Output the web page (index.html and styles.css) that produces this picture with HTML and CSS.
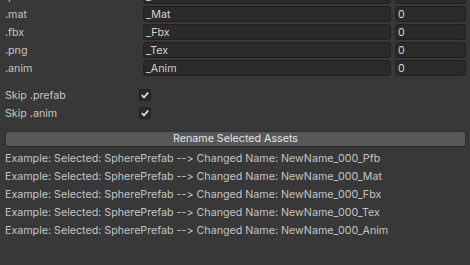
FILE: index.html
```html
<!DOCTYPE html>
<html>
<head>
<meta charset="utf-8">
<link rel="stylesheet" href="styles.css">
</head>
<body>
<div class="inspector">
  <div class="suffix-grid">
    <div class="label">.prefab</div><div class="field">_Pfb</div><div class="field num">0</div>
    <div class="label">.mat</div><div class="field">_Mat</div><div class="field num">0</div>
    <div class="label">.fbx</div><div class="field">_Fbx</div><div class="field num">0</div>
    <div class="label">.png</div><div class="field">_Tex</div><div class="field num">0</div>
    <div class="label">.anim</div><div class="field">_Anim</div><div class="field num">0</div>
  </div>
  <div class="toggles">
    <div class="toggle-row">
      <div class="label">Skip .prefab</div>
      <div class="checkbox"><svg width="10" height="10" viewBox="0 0 10 10"><path d="M1.8 5.2 L4 7.3 L8.2 2.6" fill="none" stroke="#e6e6e6" stroke-width="1.6"/></svg></div>
    </div>
    <div class="toggle-row">
      <div class="label">Skip .anim</div>
      <div class="checkbox"><svg width="10" height="10" viewBox="0 0 10 10"><path d="M1.8 5.2 L4 7.3 L8.2 2.6" fill="none" stroke="#e6e6e6" stroke-width="1.6"/></svg></div>
    </div>
  </div>
  <button class="btn">Rename Selected Assets</button>
  <div class="examples">
    <div class="example">Example: Selected: SpherePrefab --&gt; Changed Name: NewName_000_Pfb</div>
    <div class="example">Example: Selected: SpherePrefab --&gt; Changed Name: NewName_000_Mat</div>
    <div class="example">Example: Selected: SpherePrefab --&gt; Changed Name: NewName_000_Fbx</div>
    <div class="example">Example: Selected: SpherePrefab --&gt; Changed Name: NewName_000_Tex</div>
    <div class="example">Example: Selected: SpherePrefab --&gt; Changed Name: NewName_000_Anim</div>
  </div>
</div>
</body>
</html>
```
FILE: styles.css
```css
html, body {
  margin: 0;
  padding: 0;
  background: #383838;
  width: 470px;
  height: 265px;
  overflow: hidden;
}
html {
  box-shadow: inset -1px 0 #3e3e3e;
}
body {
  font-family: Inter, "Liberation Sans", sans-serif;
  font-size: 10.7px;
  font-feature-settings: "calt" 0, "liga" 0;
  color: #c4c4c4;
}
.inspector {
  padding: 0 4px 0 5px;
  margin-top: -12px;
}
.suffix-grid {
  display: grid;
  grid-template-columns: 134px 1fr 71px;
  grid-auto-rows: 16px;
  column-gap: 4px;
  row-gap: 2px;
}
.label {
  line-height: 16px;
  padding-top: 1px;
  white-space: nowrap;
}
.field {
  box-sizing: border-box;
  background: #2a2a2a;
  border: 1px solid #212121;
  border-radius: 3px;
  padding: 1px 2px 0;
  line-height: 14px;
  color: #d2d2d2;
  white-space: nowrap;
  overflow: hidden;
}
.toggles {
  margin-top: 9px;
}
.toggle-row {
  display: grid;
  grid-template-columns: 134px 12px;
  align-items: center;
  height: 18px;
}
.toggle-row .label {
  line-height: 18px;
  padding-top: 2px;
}
.checkbox {
  box-sizing: border-box;
  width: 12px;
  height: 12px;
  background: #2a2a2a;
  border: 1px solid #212121;
  border-radius: 2px;
  display: flex;
  align-items: center;
  justify-content: center;
}
.btn {
  display: block;
  box-sizing: border-box;
  width: 100%;
  height: 16px;
  margin-top: 10px;
  padding: 0;
  background: #585858;
  border: 1px solid #303030;
  border-bottom-color: #242424;
  border-radius: 3px;
  font-family: Inter, "Liberation Sans", sans-serif;
  font-size: 10.7px;
  font-feature-settings: "calt" 0, "liga" 0;
  line-height: 14px;
  color: #e4e4e4;
}
.examples {
  margin-top: 3px;
}
.example {
  line-height: 18px;
  white-space: nowrap;
}
```
